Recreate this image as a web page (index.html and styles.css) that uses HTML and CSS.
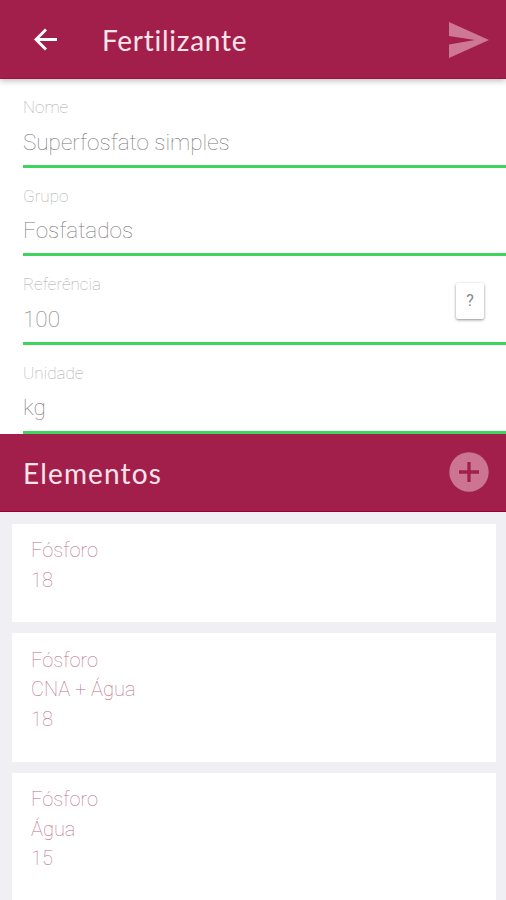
FILE: index.html
```html
<!DOCTYPE html>
<html lang="pt-BR">
<head>
<meta charset="utf-8">
<title>Fertilizante</title>
<link rel="stylesheet" href="styles.css">
</head>
<body>
<header class="bar top">
  <svg class="back" viewBox="0 0 24 24"><path d="M12.5 1.5 2 12 12.500 22.500M2 12h22"/></svg>
  <h1 class="title">Fertilizante</h1>
  <svg class="send" viewBox="0 0 40 36"><path d="M0 0 40 18 0 36V22.4L26 18 0 14Z"/></svg>
</header>
<main>
  <section class="form">
    <div class="field"><span class="label">Nome</span><span class="value">Superfosfato simples</span></div>
    <div class="field"><span class="label">Grupo</span><span class="value">Fosfatados</span></div>
    <div class="field"><span class="label">Referência</span><span class="value">100</span><button class="help">?</button></div>
    <div class="field"><span class="label">Unidade</span><span class="value">kg</span></div>
  </section>
  <div class="bar section">
    <h2 class="title elements">Elementos</h2>
    <svg class="add" viewBox="0 0 40 40"><circle cx="20" cy="20" r="19.7"/><path d="M20 10v20M10 20h20"/></svg>
  </div>
  <section class="cards">
    <article class="card"><p>Fósforo</p><p>18</p></article>
    <article class="card tall"><p>Fósforo</p><p>CNA + Água</p><p>18</p></article>
    <article class="card tall"><p>Fósforo</p><p>Água</p><p>15</p></article>
  </section>
</main>
</body>
</html>
```
FILE: styles.css
```css
* { box-sizing: border-box; }
body { margin: 0; height: 900px; overflow: hidden; background: #efeff4; font-family: Roboto, "Liberation Sans", sans-serif; font-weight: 100; }
h1, h2, p { margin: 0; }
.bar { display: flex; align-items: center; background: #a11f4a; color: #ffe3eb; }
.top { position: relative; height: 79px; padding: 1px 17px 0 34px; border-bottom: 1px solid #98133f; box-shadow: 0 2px 6px rgba(0,0,0,.25); }
.title { font: 400 28px/36px Lato, sans-serif; letter-spacing: .73px; }
.elements { letter-spacing: 1.15px; }
.back { width: 23px; height: 23px; fill: none; stroke: #fff; stroke-width: 3; }
.top .title { margin-left: 45px; }
.send { width: 40px; height: 36px; margin-left: auto; fill: #cf7896; }
.form { height: 355px; padding: 10.2px 0 0 23px; background: #fff; }
.field { position: relative; display: flex; flex-direction: column; height: 88.6px; padding-top: 7px; border-bottom: 3px solid #3fd360; }
.field:first-child { height: 78.6px; }
.field + .field { padding-top: 17px; }
.label { font-size: 17px; line-height: 22px; color: #aaa; }
.value { margin-top: 9.4px; font-size: 22.5px; line-height: 28px; color: #777; }
.help { position: absolute; right: 22px; top: 27px; width: 28px; height: 36px; padding: 0 0 2px; border: 0; border-radius: 2px; background: #fff; box-shadow: 0 1px 3px rgba(0,0,0,.45); font: 400 16px Roboto, sans-serif; color: #888; }
.section { height: 78px; padding: 0 17px 0 23px; border-bottom: 1px solid #98002f; }
.add { width: 40px; height: 40px; margin: -1px 0 0 auto; fill: #cb7593; stroke: #a11f4a; stroke-width: 3.3; }
.add circle { stroke: none; }
.cards { display: flex; flex-direction: column; gap: 11px; padding: 12px 10px 0 12px; }
.card { height: 98px; padding: 12.4px 19px; background: #fff; color: #b96e86; font-size: 20px; line-height: 29.5px; }
.tall { height: 128.5px; padding-top: 12.6px; }
```
